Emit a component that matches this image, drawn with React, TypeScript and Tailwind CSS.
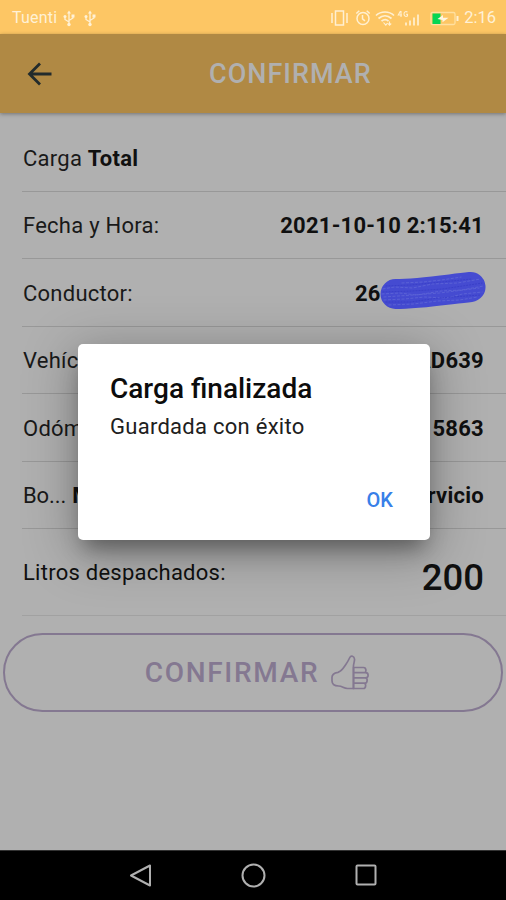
import React from 'react';

type RowProps = {
  label: React.ReactNode;
  value?: React.ReactNode;
};

function Row({ label, value }: RowProps) {
  return (
    <div className="ml-[22px] flex h-[67.5px] items-center justify-between border-b border-[#989898] pl-[1px] pr-[22px] pt-[2px] text-[22px] tracking-[0.25px] text-[#191919]">
      <span>{label}</span>
      {value && <span className="flex items-center font-bold text-[#101010]">{value}</span>}
    </div>
  );
}

function UsbIcon() {
  return (
    <svg width="12" height="17" viewBox="0 0 12 17" fill="none" stroke="#fff1d6" strokeWidth="1.3">
      <path d="M6 3v11M6 12L2 9.500V6.500M6 10.500l4-2.500V6" />
      <path d="M6 0.500l2 3H4z" fill="#fff1d6" stroke="none" />
      <circle cx="6" cy="14.500" r="1.700" fill="#fff1d6" stroke="none" />
      <circle cx="2" cy="6.500" r="1.500" fill="#fff1d6" stroke="none" />
      <path d="M8.500 4.500h3v3h-3z" fill="#fff1d6" stroke="none" />
    </svg>
  );
}

function StatusIcons() {
  return (
    <svg width="132" height="20" viewBox="0 0 132 20" fill="none" stroke="#fff0d2" strokeWidth="1.3">
      {/* vibrate */}
      <path d="M5.500 3h8v14h-8zM2 5v10M17 5v10" strokeWidth="1.500" />
      {/* alarm */}
      <circle cx="33" cy="10.500" r="6" strokeWidth="1.500" />
      <path d="M32.500 7v3.800l2.500 2M26.300 5.500l3-2.800M39.700 5.500l-3-2.800" strokeWidth="1.500" />
      {/* wifi */}
      <path d="M46 7.500c5-4.700 13-4.700 18 0M48.500 10.500c4-3.500 9-3.500 13 0M51.500 13.200c2.300-2 5-2 7 0" strokeWidth="1.700" />
      <path d="M53.500 14.500l2.300 2.700l1.700-2M59.500 13.500v3.500M58 15.500l1.500 1.700l1.700-1.700" strokeWidth="1.100" />
      {/* 4G */}
      <path d="M70.500 3l-2.200 4h3.700M71 3v6M77.500 4c-2-1-3.500 0-3.500 2s1.500 3 3.500 2V6.200h-1.500" strokeWidth="1.100" />
      <path d="M76 14.500v3M80 12.500v5M84 9.500v8M88 6.500v11" strokeWidth="1.700" />
      {/* battery */}
      <rect x="101" y="4.500" width="24" height="12" rx="1.500" stroke="#ffe0a0" />
      <path d="M127.500 8v5" strokeWidth="2" />
      <path d="M102.500 5.500h8v10.500h-8z" fill="#05d653" stroke="none" />
      <path d="M107.500 11l5.500-4v2.800h5.500l-6 4.500V12z" fill="#fff5df" stroke="none" />
    </svg>
  );
}

function ThumbIcon() {
  return (
    <svg width="39" height="36" viewBox="0 0 39 36" fill="none" stroke="#847891" strokeWidth="1.700" strokeLinejoin="round" strokeLinecap="round">
      <path d="M22.500 12.500c-.5-3 1.300-5.800 1-8.500c-.3-3-3.500-4-4.700-1.500c-1.300 3-2.300 4.500-4.300 7.500c-2 3-4 6.500-7.500 7.300c-3.500.6-6 1.700-6 5v3.500c0 3.700 2.500 5.200 6.500 5.200c4 0 5 2.500 9 2.500h6z" />
      <path d="M22.500 12.500h10c3 0 3.300 5.200.5 5.200h-10.500h12c3.500 0 3.500 5.200 0 5.200H22.500h12c2.500 0 2 5.300-.5 5.300H22.500h10.500c2.500 0 2 5.300-.5 5.300h-10z" />
    </svg>
  );
}

// hand-drawn marker stroke hiding the rest of the driver's document
function Scribble() {
  return (
    <svg className="absolute -top-[6px] left-[22px]" width="112" height="40" viewBox="0 0 109 40" fill="none">
      <path d="M17 21C40 21 65 17 92 14" stroke="#454bd1" strokeWidth="30" strokeLinecap="round" transform="translate(0 2)" />
      <path d="M4 18l12-2l18 1l20-4l25-1l23-4M3 23l18-1l17 2l25-4l20-1l22-4M5 29l21-1l20-2l22 1l16-4l20-2M10 34l25-1l24-3l22-1l18-3M23 12l22-1l18-2l20-3M5 26l30-2l26-2l40-5" stroke="#6067d7" strokeWidth="0.800" strokeDasharray="3 1.500" />
      <path d="M7 15l25-1l21-2l40-4M4 21l30-1l30-2l40-6M7 31l25 0l28-4l42-3" stroke="#353bc4" strokeWidth="0.700" strokeDasharray="2 1" />
    </svg>
  );
}

export default function App() {
  return (
    <div className="relative flex h-[900px] w-[506px] flex-col overflow-hidden bg-[#b0b0b0] font-[Roboto,sans-serif]">
      <div className="flex h-[34px] shrink-0 items-center justify-between bg-[#fdc664] pl-[12px] pr-[10px] pt-[1px] text-[#fff1d6]">
        <div className="flex items-center pt-[1px]">
          <span className="w-[51px] text-[16px] tracking-[0.2px]">Tuenti</span>
          <UsbIcon />
          <span className="w-[9px]" />
          <UsbIcon />
        </div>
        <div className="flex items-center gap-[2px]">
          <StatusIcons />
          <span className="pt-[2px] text-[16.500px]">2:16</span>
        </div>
      </div>

      <header className="z-10 flex h-[79px] shrink-0 items-center bg-[#b08944] pl-[27px] shadow-[0_1px_4px_rgba(0,0,0,0.35)]">
        <svg width="25" height="24" viewBox="0 0 25 24" fill="none" stroke="#222b2c" strokeWidth="2.800">
          <path d="M13 1.500L2.500 12L13 22.500M2.500 12H24.500" />
        </svg>
        <h1 className="ml-[157px] pt-[2px] text-[27px] font-medium tracking-[1px] text-[#b0b0b0]">CONFIRMAR</h1>
      </header>

      <main className="flex-1 pt-[11px]">
        <Row label={<>Carga <b className="text-[#101010]">Total</b></>} />
        <Row label="Fecha y Hora:" value="2021-10-10 2:15:41" />
        <Row
          label="Conductor:"
          value={<span className="relative w-[129px]">26<Scribble /></span>}
        />
        <Row label="Vehíc" value="AD639" />
        <Row label="Odóm" value="5863" />
        <Row label={<span className="flex gap-[6px] tracking-[-0.100px]"><span>Bo...</span><b className="text-[#101010]">M</b></span>} value="Servicio" />
        <div className="ml-[22px] flex h-[87px] items-center justify-between border-b border-[#a1a1a1] pl-[1px] pr-[22px] text-[22px] tracking-[0.25px] text-[#101010]">
          <span className="pt-[1px]">Litros despachados:</span>
          <span className="pt-[13px] text-[36.500px] font-medium tracking-normal">200</span>
        </div>
        <div className="mx-[3px] mt-[17px] flex h-[79px] items-center justify-center rounded-full border-2 border-[#847891] pl-[9px] text-[#847891]">
          <span className="mr-[12px] text-[28px] font-medium tracking-[1.700px]">CONFIRMAR</span>
          <ThumbIcon />
        </div>
      </main>

      <nav className="flex h-[50px] shrink-0 items-center justify-center gap-[88px] border-t border-[#333] bg-black">
        <svg width="24" height="26" viewBox="0 0 24 26" fill="none" stroke="#b0b0b0" strokeWidth="2" strokeLinejoin="round">
          <path d="M22 2.500v20L3 12.500z" />
        </svg>
        <svg width="26" height="26" viewBox="0 0 26 26" fill="none" stroke="#b0b0b0" strokeWidth="2">
          <circle cx="13.500" cy="12.500" r="11" />
        </svg>
        <svg width="24" height="24" viewBox="0 0 24 24" fill="none" stroke="#b0b0b0" strokeWidth="2">
          <rect x="2.500" y="1.500" width="19" height="19" rx="1" />
        </svg>
      </nav>

      <div className="absolute left-[78px] top-[344px] z-20 flex h-[196px] w-[352px] flex-col rounded-[5px] bg-white pl-[32px] pr-[37px] pt-[27px] shadow-[0_14px_20px_-6px_rgba(0,0,0,0.35),0_10px_50px_6px_rgba(0,0,0,0.26)]">
        <h2 className="text-[28px] font-medium leading-[36px] text-[#0c0c0c]">Carga finalizada</h2>
        <p className="mt-[5px] text-[22px] leading-[30px] tracking-[0.270px] text-[#202020]">Guardada con éxito</p>
        <button className="mt-[43px] self-end text-[20px] font-medium leading-[30px] text-[#3880e8]">OK</button>
      </div>
    </div>
  );
}
